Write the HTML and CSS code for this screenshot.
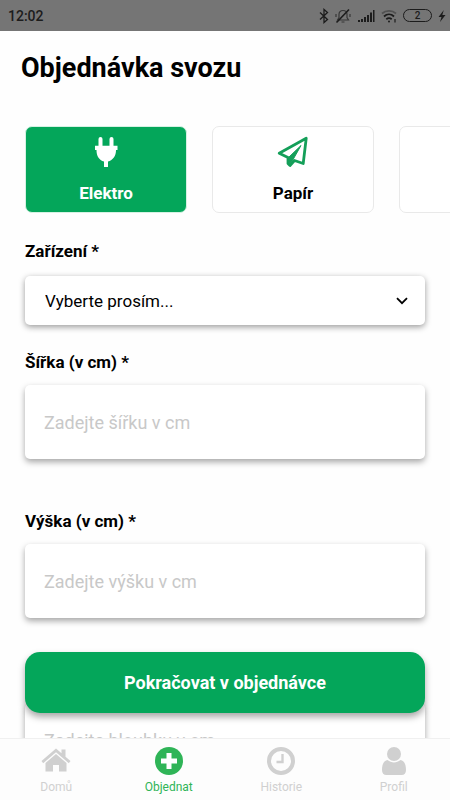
FILE: index.html
```html
<!DOCTYPE html>
<html lang="cs">
<head>
<meta charset="utf-8">
<meta name="viewport" content="width=device-width, initial-scale=1">
<title>Objednávka svozu</title>
<link rel="stylesheet" href="styles.css">
</head>
<body>
<header class="status">
  <time>12:02</time>
  <div class="status-icons">
    <svg width="10" height="16" viewBox="0 0 10 16" fill="none" stroke="currentColor" stroke-width="1.3"><path d="M1 4.500l7.500 7L5 14.500v-13l3.500 3L1 11.500"/></svg>
    <svg width="16" height="16" viewBox="0 0 16 16" fill="none" stroke="currentColor" stroke-width="1.200"><path d="M2.500 12L4 9.500V6.500C4 4 5.500 2.500 8 2.500S12 4 12 6.500v3l1.500 2.500zM6.500 14h3M1 6v3M15 6v3" opacity=".7"/><path d="M1.500 14.500L14 1.500" stroke-width="1.600"/></svg>
    <svg width="18" height="16" viewBox="0 0 18 16" fill="currentColor"><path d="M1 12h2v2H1zM4 11h2v3H4zM7 9h2v5H7zM10 7h2v7h-2zM13 4.500h2V14h-2zM16 2h1.500v12H16z"/></svg>
    <svg width="16" height="16" viewBox="0 0 16 16" fill="none" stroke="currentColor" stroke-width="1.800"><path d="M1 5.500c4-3.500 10-3.500 14 0" opacity=".4"/><path d="M3 8.500c3-2.800 7-2.800 10 0M5.300 11.300c1.800-1.500 3.600-1.500 5.400 0"/><circle cx="8" cy="13.500" r="1" fill="currentColor" stroke="none"/><path d="M14 11v3.500" stroke-width="1.200"/></svg>
    <span class="battery">2</span>
    <svg width="8" height="16" viewBox="0 0 8 16" fill="currentColor"><path d="M5.800 2L.5 9h3L2 14l5.500-7H4.300z"/></svg>
  </div>
</header>
<main class="screen">
  <h1>Objednávka svozu</h1>
  <div class="kinds">
    <button class="kind selected" type="button">
      <svg width="32" height="32" viewBox="0 0 32 32" fill="currentColor"><path d="M8.500 10V3a2 2 0 0 1 4 0v7zM19.500 10V3a2 2 0 0 1 4 0v7zM5 9.700h22.500v4.300H26c0 6-3 10.200-8 11.500V31h-4v-5.500C9 24.200 6.500 20 6.500 14H5z"/></svg>
      Elektro
    </button>
    <button class="kind" type="button">
      <svg class="plane" width="32" height="32" viewBox="0 0 32 32" fill="none" stroke="currentColor" stroke-width="2.800" stroke-linejoin="round" stroke-linecap="round"><path d="M2.200 17.300L29.200 2.300 26.200 27.500 17.500 24.500 13 29.500 11 27.500V21.500z"/><path d="M11 22L24 9.500 15.500 24.500 12.500 28.500z" fill="currentColor" stroke-width="1"/></svg>
      Papír
    </button>
    <button class="kind" type="button" aria-label="Další"></button>
  </div>
  <form class="form" id="order">
    <div class="field compact">
      <label for="device">Zařízení *</label>
      <div class="select">
        <select id="device"><option>Vyberte prosím...</option></select>
        <svg width="12" height="8" viewBox="0 0 12 8" fill="none" stroke="currentColor" stroke-width="1.800"><path d="M1 1.200l5 5 5-5"/></svg>
      </div>
    </div>
    <div class="field">
      <label for="width">Šířka (v cm) *</label>
      <input id="width" type="text" inputmode="numeric" placeholder="Zadejte šířku v cm">
    </div>
    <div class="field">
      <label for="height">Výška (v cm) *</label>
      <input id="height" type="text" inputmode="numeric" placeholder="Zadejte výšku v cm">
    </div>
    <div class="field unlabelled">
      <input type="text" inputmode="numeric" aria-label="Hloubka (v cm)" placeholder="Zadejte hloubku v cm">
    </div>
  </form>
</main>
<footer class="dock">
  <button class="submit" type="submit" form="order">Pokračovat v objednávce</button>
  <nav class="tabs">
    <a href="#domu"><svg width="30" height="30" viewBox="0 0 30 30" fill="currentColor"><path d="M15 2.500l5.500 4.700V3.500h4v7.200l5 4.300-1.700 2.200L15 6.200 2.200 17.200.5 15z"/><path d="M15 8l10.500 9v8.500h-7.500V19h-6v6.500H4.500V17z"/></svg>Domů</a>
    <a class="active" href="#objednat"><svg width="30" height="30" viewBox="0 0 30 30"><circle cx="15" cy="15" r="14" fill="currentColor"/><path d="M15 7v16M7 15h16" stroke="#fff" stroke-width="5"/></svg>Objednat</a>
    <a href="#historie"><svg width="30" height="30" viewBox="0 0 30 30" fill="none" stroke="currentColor"><circle cx="15" cy="15" r="12" stroke-width="4"/><path d="M16.500 8v8h-6" stroke-width="2.400"/></svg>Historie</a>
    <a href="#profil"><svg width="30" height="30" viewBox="0 0 30 30" fill="currentColor"><circle cx="15" cy="8" r="7"/><path d="M8.500 14c4 3.200 9 3.200 13 0 3.500.5 5.500 4 5.500 10 0 3-1.500 5-4.500 5h-15C4.500 29 3 27 3 24c0-6 2-9.500 5.500-10z"/></svg>Profil</a>
  </nav>
</footer>
</body>
</html>
```
FILE: styles.css
```css
* { box-sizing: border-box; }
body {
  display: flex;
  flex-direction: column;
  height: 100vh;
  margin: 0;
  overflow: hidden;
  background: #fefefe;
  color: #000;
  font-family: Roboto, "Liberation Sans", sans-serif;
}
button, input, select { font: inherit; color: inherit; }
svg { display: block; flex: none; }

.status {
  display: flex;
  flex: none;
  align-items: center;
  justify-content: space-between;
  height: 31px;
  padding: 0 4px 0 8px;
  background: #757575;
  color: #1c1c1c;
  font-size: 14px;
  font-weight: 500;
}
.status-icons { display: flex; align-items: center; gap: 6px; }
.battery {
  width: 29px;
  border: 1px solid currentColor;
  border-radius: 7px;
  font-size: 10px;
  line-height: 11px;
  text-align: center;
}

.screen { flex: 1; min-height: 0; overflow: hidden; }
h1 {
  margin: 21px 21px 41px;
  font-size: 27px;
  line-height: 33px;
}
.kinds {
  display: flex;
  gap: 25px;
  padding: 0 25px;
  overflow: hidden;
}
.kind {
  display: flex;
  flex: 0 0 162px;
  flex-direction: column;
  align-items: center;
  gap: 15px;
  height: 87px;
  padding: 9px 0 0;
  border: 1px solid #e9e9e9;
  border-radius: 7px;
  background: #fff;
  font-size: 17px;
  font-weight: 700;
  line-height: 20px;
}
.kind.selected { border-color: #d6f1e3; background: #04a65a; color: #fff; }
.plane { color: #149f59; }

.form { padding: 28px 25px 0; }
.field {
  display: flex;
  flex-direction: column;
  gap: 13px;
  margin-bottom: 52px;
}
.field.compact { gap: 15px; margin-bottom: 27px; }
.field.unlabelled { padding-top: 33px; }
label { font-size: 17px; font-weight: 700; line-height: 20px; }
input, select {
  width: 100%;
  height: 74px;
  padding: 0 19px;
  border: 0;
  border-radius: 5px;
  background: #fff;
  box-shadow: 0 3px 6px rgb(0 0 0 / 35%);
  font-size: 18px;
}
input::placeholder { color: #c8c8c8; opacity: 1; }
.select { display: grid; align-items: center; }
.select > * { grid-area: 1 / 1; }
select {
  height: 49px;
  padding: 0 20px;
  appearance: none;
  box-shadow: 0 2px 6px rgb(0 0 0 / 40%);
  font-size: 17px;
}
.select svg { justify-self: end; margin-right: 17px; pointer-events: none; }

.dock { position: relative; flex: none; }
.submit {
  position: absolute;
  right: 25px;
  bottom: calc(100% + 25px);
  left: 25px;
  height: 61px;
  border: 0;
  border-radius: 15px;
  background: #04a65a;
  box-shadow: 0 4px 7px rgb(0 0 0 / 35%);
  color: #fff;
  font-size: 18px;
  font-weight: 700;
}
.tabs {
  display: flex;
  height: 62px;
  border-top: 1px solid #f0f0f0;
  background: #fdfdfd;
}
.tabs a {
  display: flex;
  flex: 1;
  flex-direction: column;
  align-items: center;
  gap: 2px;
  padding-top: 7px;
  color: #d0d0d0;
  font-size: 12px;
  line-height: 18px;
  text-decoration: none;
}
.tabs .active { color: #2fb457; }
```
